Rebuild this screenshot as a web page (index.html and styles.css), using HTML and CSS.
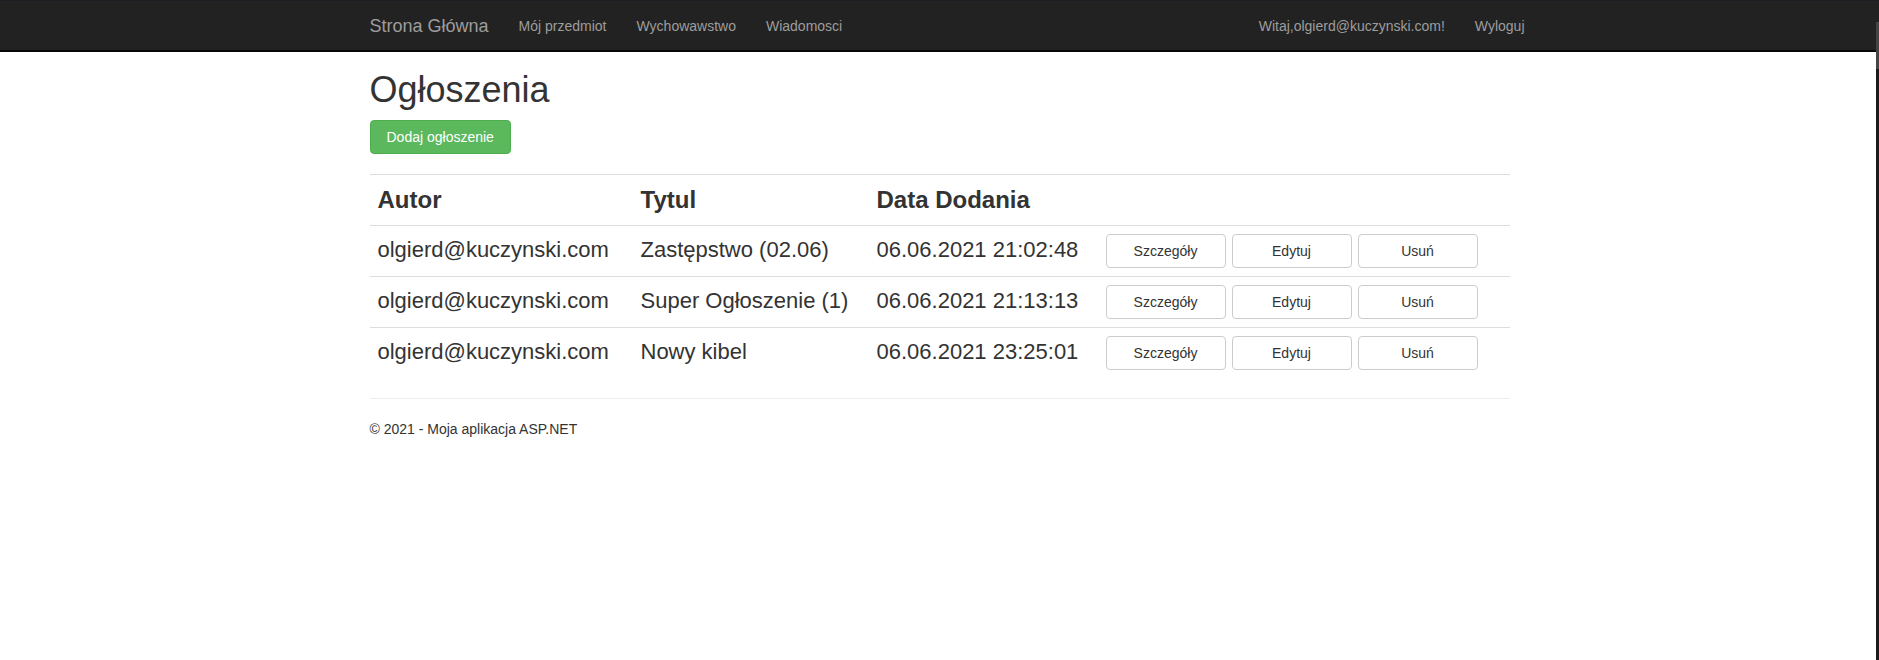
FILE: index.html
```html
<!DOCTYPE html>
<html lang="pl">
<head>
<meta charset="utf-8">
<title>Ogłoszenia</title>
<link rel="stylesheet" href="styles.css">
</head>
<body>
<nav class="navbar">
  <div class="container navbar-inner">
    <div class="nav-left">
      <a class="brand" href="#">Strona Główna</a>
      <ul class="nav">
        <li><a href="#">Mój przedmiot</a></li>
        <li><a href="#">Wychowawstwo</a></li>
        <li><a href="#">Wiadomosci</a></li>
      </ul>
    </div>
    <ul class="nav nav-right">
      <li><a href="#">Witaj,olgierd@kuczynski.com!</a></li>
      <li><a href="#">Wyloguj</a></li>
    </ul>
  </div>
</nav>
<main class="container body-content">
  <h1 class="page-title">Ogłoszenia</h1>
  <div class="actions">
    <a class="btn btn-success" href="#">Dodaj ogłoszenie</a>
  </div>
  <table class="table">
    <tr>
      <th class="col-author">Autor</th>
      <th class="col-title">Tytul</th>
      <th class="col-date">Data Dodania</th>
      <th></th>
    </tr>
    <tr>
      <td>olgierd@kuczynski.com</td>
      <td>Zastępstwo (02.06)</td>
      <td>06.06.2021 21:02:48</td>
      <td><div class="row-buttons"><a class="btn btn-default" href="#">Szczegóły</a><a class="btn btn-default" href="#">Edytuj</a><a class="btn btn-default" href="#">Usuń</a></div></td>
    </tr>
    <tr>
      <td>olgierd@kuczynski.com</td>
      <td>Super Ogłoszenie (1)</td>
      <td>06.06.2021 21:13:13</td>
      <td><div class="row-buttons"><a class="btn btn-default" href="#">Szczegóły</a><a class="btn btn-default" href="#">Edytuj</a><a class="btn btn-default" href="#">Usuń</a></div></td>
    </tr>
    <tr>
      <td>olgierd@kuczynski.com</td>
      <td>Nowy kibel</td>
      <td>06.06.2021 23:25:01</td>
      <td><div class="row-buttons"><a class="btn btn-default" href="#">Szczegóły</a><a class="btn btn-default" href="#">Edytuj</a><a class="btn btn-default" href="#">Usuń</a></div></td>
    </tr>
  </table>
  <hr class="footer-rule">
  <footer class="footer">
    <p>&copy; 2021 - Moja aplikacja ASP.NET</p>
  </footer>
</main>
<div class="scrollbar"><div class="scrollbar-thumb"></div></div>
</body>
</html>
```

FILE: styles.css
```css
* { box-sizing: border-box; }

html, body {
  margin: 0;
  padding: 0;
  background: #fff;
}

body {
  font-family: "Liberation Sans", Arial, sans-serif;
  font-size: 14px;
  line-height: 1.42857143;
  color: #333;
}

a { text-decoration: none; }

.container {
  width: 1170px;
  margin: 0 auto;
  padding: 0 15px;
}

/* navbar */
.navbar {
  background: #222;
  height: 52px;
  border-bottom: 2px solid #080808;
  box-shadow: inset 0 1px 0 #1c1c23;
}

.navbar-inner {
  display: flex;
  justify-content: space-between;
  align-items: flex-start;
  height: 50px;
}

.nav-left {
  display: flex;
  margin-left: -15px;
}

.brand {
  display: block;
  height: 50px;
  padding: 16px 15px 14px;
  font-size: 18px;
  line-height: 20px;
  color: #9d9d9d;
}

.nav {
  display: flex;
  list-style: none;
  margin: 0;
  padding: 0;
}

.nav a {
  display: block;
  padding: 16px 15px 14px;
  line-height: 20px;
  color: #9d9d9d;
}

.nav-right {
  margin-right: -30px;
}

/* content */
.page-title {
  margin: 18px 0 10px;
  font-size: 36px;
  font-weight: 500;
  line-height: 1.1;
  color: #333;
}

.actions {
  display: flex;
  margin-bottom: 20px;
}

.btn {
  display: inline-block;
  padding: 6px 12px;
  font-size: 14px;
  line-height: 20px;
  text-align: center;
  border: 1px solid transparent;
  border-radius: 4px;
  white-space: nowrap;
}

.btn-success {
  padding: 6px 16px;
  color: #fff;
  background-color: #5cb85c;
  border-color: #4cae4c;
}

.btn-default {
  width: 120px;
  color: #333;
  background-color: #fff;
  border-color: #ccc;
}

.table {
  width: 100%;
  border-collapse: collapse;
  border-spacing: 0;
  margin-bottom: 20px;
}

.table th,
.table td {
  padding: 8px;
  border-top: 1px solid #ddd;
  vertical-align: top;
  text-align: left;
  line-height: 1.42857143;
}

.table th {
  font-size: 24px;
  font-weight: 700;
}

.table td {
  font-size: 22px;
}

.col-author { width: 263px; }
.col-title { width: 236px; }
.col-date { width: 229px; }

.row-buttons {
  display: flex;
  gap: 6px;
}

.footer-rule {
  margin: 0 0 20px;
  border: 0;
  border-top: 1px solid #eee;
}

.footer p {
  margin: 0 0 10px;
}

/* thin overlay scrollbar at the right edge */
.scrollbar {
  position: fixed;
  top: 22px;
  right: 0;
  bottom: 0;
  width: 3px;
  background: #1b1b1b;
}

.scrollbar-thumb {
  height: 47px;
  background: #454545;
}
```
